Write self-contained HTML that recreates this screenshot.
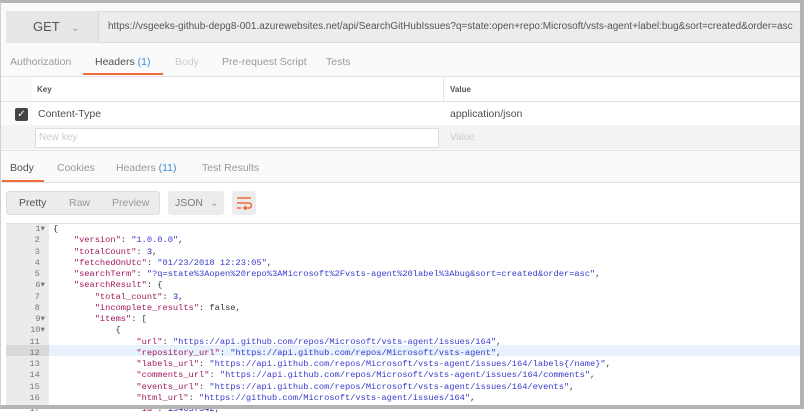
<!DOCTYPE html>
<html><head><meta charset="utf-8"><style>
*{margin:0;padding:0;box-sizing:border-box}
body{width:804px;height:409px;overflow:hidden;background:#fff;font-family:"Liberation Sans",sans-serif;position:relative}
.frame{position:absolute;left:0;top:0;width:804px;height:409px;border-top:3px solid #b4b4b4;border-right:4px solid #b4b4b4;border-bottom:4px solid #b4b4b4;border-left:1px solid #cfcfcf;pointer-events:none;z-index:10}
.a{position:absolute}
.top{left:0;top:0;width:804px;height:182px;background:#fafafa}
.url{left:6px;top:11px;width:798px;height:32px;background:#ececec;border:1px solid #dcdcdc;border-radius:3px}
.get{left:6px;top:11px;width:93px;height:32px;background:#e6e6e6;border-right:1px solid #d6d6d6;color:#555;font-size:13px;line-height:32px;padding-left:27px}
.urltext{left:108px;top:11px;line-height:32px;font-size:10px;color:#555;white-space:nowrap}
.tab{font-size:10.5px;color:#999;top:56px;white-space:nowrap}
.line{background:#e2e2e2;height:1px}
.code{left:6px;top:223px;width:798px;height:186px;background:#fff;border-top:1px solid #e0e0e0;border-left:1px solid #e0e0e0}
.gut{left:6px;top:224px;width:43px;height:185px;background:#ebebeb}
pre{font-family:"Liberation Mono",monospace;font-size:8.7px;line-height:11.27px;color:#333;white-space:pre}
.k{color:#a3195b}.s{color:#3a3acd}.n{color:#1a1aa6}
.ln{position:absolute;left:6px;top:224px;width:39px;text-align:right;color:#777}
</style></head><body>
<div class="a top"></div>
<div class="a url"></div>
<div class="a get">GET <span style="font-size:10px;color:#999;margin-left:8px">&#8964;</span></div>
<div class="a urltext">https://vsgeeks-github-depg8-001.azurewebsites.net/api/SearchGitHubIssues?q=state:open+repo:Microsoft/vsts-agent+label:bug&amp;sort=created&amp;order=asc</div>
<div class="a tab" style="left:10px">Authorization</div>
<div class="a tab" style="left:95px;color:#505050">Headers <span style="color:#3b8fd8">(1)</span></div>
<div class="a tab" style="left:175px;color:#ccc">Body</div>
<div class="a tab" style="left:222px">Pre-request Script</div>
<div class="a tab" style="left:326px">Tests</div>
<div class="a" style="left:83px;top:73px;width:80px;height:2px;background:#f26b3a"></div>
<div class="a line" style="left:0;top:76px;width:804px"></div>
<div class="a" style="left:32px;top:77px;width:772px;height:24px;background:#fff"></div>
<div class="a" style="left:443px;top:77px;width:1px;height:24px;background:#e6e6e6"></div>
<div class="a" style="left:37px;top:85px;font-size:8px;font-weight:bold;color:#555">Key</div>
<div class="a" style="left:450px;top:85px;font-size:8px;font-weight:bold;color:#555">Value</div>
<div class="a line" style="left:0;top:101px;width:804px"></div>
<div class="a" style="left:32px;top:102px;width:772px;height:23px;background:#fff"></div>
<div class="a" style="left:15px;top:108px;width:13px;height:13px;background:#444;border-radius:2px;color:#fff;font-size:10px;line-height:13px;text-align:center">&#10003;</div>
<div class="a" style="left:38px;top:108px;font-size:10.5px;color:#505050">Content-Type</div>
<div class="a" style="left:450px;top:108px;font-size:10.5px;color:#505050">application/json</div>
<div class="a" style="left:0;top:125px;width:804px;height:24px;background:#f3f3f3"></div>
<div class="a" style="left:35px;top:128px;width:404px;height:20px;background:#fff;border:1px solid #ddd"></div>
<div class="a" style="left:39px;top:132px;font-size:10px;color:#ccc">New key</div>
<div class="a" style="left:450px;top:132px;font-size:10px;color:#ccc">Value</div>
<div class="a line" style="left:0;top:150px;width:804px"></div>
<div class="a" style="left:10px;top:162px;font-size:10.5px;color:#505050">Body</div>
<div class="a" style="left:57px;top:162px;font-size:10.5px;color:#999">Cookies</div>
<div class="a" style="left:116px;top:162px;font-size:10.5px;color:#999">Headers <span style="color:#3b8fd8">(11)</span></div>
<div class="a" style="left:202px;top:162px;font-size:10.5px;color:#999">Test Results</div>
<div class="a" style="left:2px;top:180px;width:42px;height:2px;background:#f26b3a"></div>
<div class="a line" style="left:0;top:182px;width:804px"></div>
<div class="a" style="left:6px;top:191px;width:154px;height:24px;background:#ececec;border:1px solid #ddd;border-radius:3px"></div>
<div class="a" style="left:19px;top:197px;font-size:10.5px;color:#505050">Pretty</div>
<div class="a" style="left:69px;top:197px;font-size:10.5px;color:#999">Raw</div>
<div class="a" style="left:112px;top:197px;font-size:10.5px;color:#999">Preview</div>
<div class="a" style="left:168px;top:191px;width:56px;height:24px;background:#ececec;border-radius:3px"></div>
<div class="a" style="left:175px;top:197px;font-size:10.5px;color:#777">JSON <span style="color:#999;margin-left:4px">&#8964;</span></div>
<div class="a" style="left:232px;top:191px;width:24px;height:24px;background:#ececec;border-radius:3px"></div>
<svg class="a" style="left:236px;top:196px" width="16" height="14" viewBox="0 0 16 14"><path d="M1 2h14M1 7h12a2.5 2.5 0 0 1 0 5H8M1 12h4M10 10l-2 2 2 2" stroke="#f26b3a" stroke-width="1.6" fill="none"/></svg>
<div class="a code"></div>
<div class="a gut"></div>
<div class="a" style="left:49px;top:345px;width:755px;height:11px;background:#e8f2fc"></div>
<div class="a" style="left:6px;top:345px;width:43px;height:11px;background:#d9d9d9"></div>
<pre class="ln">1▾
2 
3 
4 
5 
6▾
7 
8 
9▾
10▾
11 
12 
13 
14 
15 
16 
17 </pre>
<pre class="a" style="left:53px;top:224px">{
    <span class="k">"version"</span>: <span class="s">"1.0.0.0"</span>,
    <span class="k">"totalCount"</span>: <span class="n">3</span>,
    <span class="k">"fetchedOnUtc"</span>: <span class="s">"01/23/2018 12:23:05"</span>,
    <span class="k">"searchTerm"</span>: <span class="s">"?q=state%3Aopen%20repo%3AMicrosoft%2Fvsts-agent%20label%3Abug&amp;sort=created&amp;order=asc"</span>,
    <span class="k">"searchResult"</span>: {
        <span class="k">"total_count"</span>: <span class="n">3</span>,
        <span class="k">"incomplete_results"</span>: false,
        <span class="k">"items"</span>: [
            {
                <span class="k">"url"</span>: <span class="s">"https://api.github.com/repos/Microsoft/vsts-agent/issues/164"</span>,
                <span class="k">"repository_url"</span>: <span class="s">"https://api.github.com/repos/Microsoft/vsts-agent"</span>,
                <span class="k">"labels_url"</span>: <span class="s">"https://api.github.com/repos/Microsoft/vsts-agent/issues/164/labels{/name}"</span>,
                <span class="k">"comments_url"</span>: <span class="s">"https://api.github.com/repos/Microsoft/vsts-agent/issues/164/comments"</span>,
                <span class="k">"events_url"</span>: <span class="s">"https://api.github.com/repos/Microsoft/vsts-agent/issues/164/events"</span>,
                <span class="k">"html_url"</span>: <span class="s">"https://github.com/Microsoft/vsts-agent/issues/164"</span>,
                <span class="k">"id"</span>: <span class="n">154057342</span>,</pre>
<div class="frame"></div>
</body></html>
